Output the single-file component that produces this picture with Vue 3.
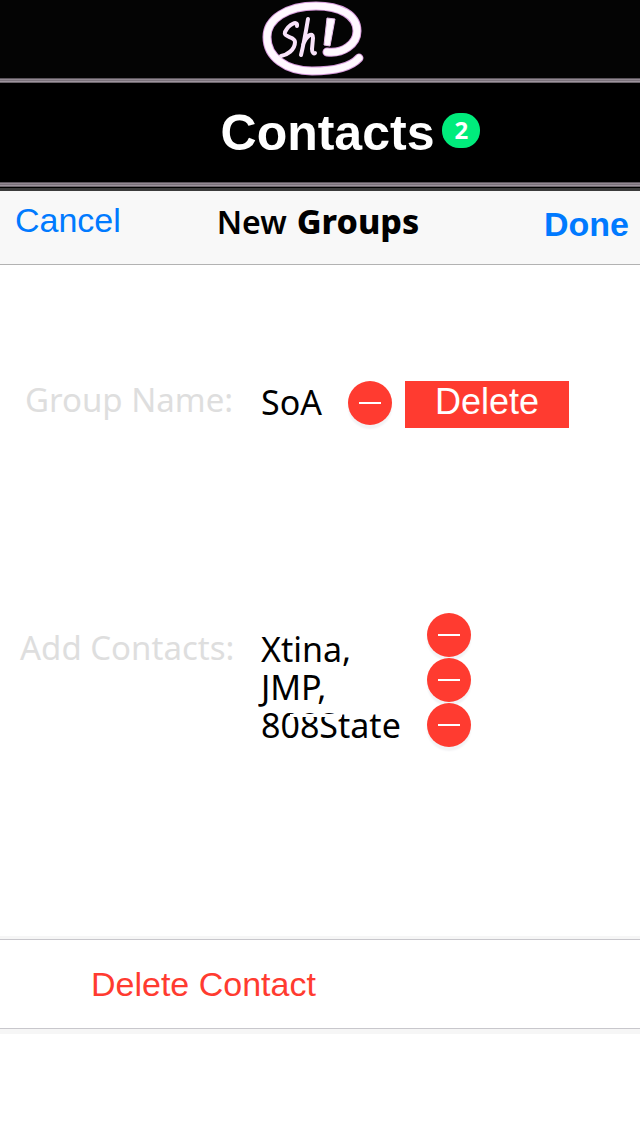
<script setup>
import { ref } from 'vue'

const groupName = ref('SoA')
const contacts = ref('Xtina,\nJMP,\n808State')
const members = ['Xtina', 'JMP', '808State']
</script>

<template>
  <div class="page">
    <header class="brand">
      <svg class="logo" viewBox="0 0 104 76" role="img" aria-label="Sh!">
        <g fill="none" stroke-linecap="round" stroke-linejoin="round">
          <path stroke="#d79bdc" stroke-width="9" d="M66 52 C82 54 96 44 96 31 C96 15 79 6 55 6 C26 6 6 19 6 37 C6 57 25 71 51 71 C72 71 90 67 98 58" />
          <path stroke="#fff8ff" stroke-width="7" d="M66 52 C82 54 96 44 96 31 C96 15 79 6 55 6 C26 6 6 19 6 37 C6 57 25 71 51 71 C72 71 90 67 98 58" />
          <g stroke="#f9e3fa" stroke-width="4">
            <path d="M36 26 C37 20 28 24 24 32 C22 38 34 36 34 42 C34 50 26 55 20 56" />
            <path d="M47 19 C45 31 43 43 40 55 M42 45 C45 36 52 31 52 38 L51 49 C51 53 53 54 54 53" />
          </g>
        </g>
        <path d="M66 18 L74 19 L69 46 L63 45 Z" fill="#fff8ff" stroke="#e6bbe9" stroke-width="1" stroke-linejoin="round" />
      </svg>
    </header>

    <div class="rule"></div>
    <div class="title">
      <h1>Contacts</h1>
      <span class="badge">2</span>
    </div>
    <div class="rule"></div>

    <nav class="nav">
      <button class="cancel" type="button">Cancel</button>
      <h2><span>New</span> <b>Groups</b></h2>
      <button class="done" type="button">Done</button>
    </nav>

    <main>
      <section class="row name-row">
        <label class="label name-label" for="group-name">Group Name:</label>
        <input id="group-name" v-model="groupName" class="field" type="text" />
        <button class="minus" type="button" aria-label="Remove group"></button>
        <button class="delete" type="button">Delete</button>
      </section>

      <section class="row contacts-row">
        <label class="label" for="contacts">Add Contacts:</label>
        <div class="names">
          <textarea id="contacts" v-model="contacts" class="field area" rows="3"></textarea>
          <span class="streak"></span>
        </div>
        <div class="removers">
          <button v-for="m in members" :key="m" class="minus" type="button" :aria-label="`Remove ${m}`"></button>
        </div>
      </section>

      <div class="footer-row">
        <button class="delete-contact" type="button">Delete Contact</button>
      </div>
    </main>
  </div>
</template>

<style>
body {
  margin: 0;
  background: #fff;
}
</style>

<style scoped>
.page {
  min-height: 100vh;
  font-family: "Liberation Sans", Arial, sans-serif;
  color: #000;
}

button,
input,
textarea {
  margin: 0;
  padding: 0;
  border: 0;
  border-radius: 0;
  background: none;
  font-family: inherit;
  color: inherit;
}

h1,
h2 {
  margin: 0;
}

.brand {
  display: flex;
  justify-content: center;
  height: 78px;
  padding-right: 14px;
  background: #040404;
}

.logo {
  width: 104px;
  height: 76px;
}

.rule {
  height: 5px;
  background: linear-gradient(#5c555c 1px, #918891 1px 2px, #7b727b 2px 3px, #9d949d 3px 4px, #6b646b 4px);
}

.title {
  display: flex;
  justify-content: center;
  gap: 8px;
  height: 99px;
  padding-left: 61px;
  background: #000;
}

h1 {
  font-size: 50px;
  line-height: 100px;
  color: #fff;
}

.badge {
  width: 38px;
  height: 35px;
  margin-top: 30px;
  border-radius: 17px;
  background: #00ec7c;
  color: #fff;
  font: bold 24px/34px "Noto Sans", sans-serif;
  text-align: center;
}

.nav {
  display: grid;
  grid-template-columns: 1fr auto 1fr;
  align-items: start;
  height: 73px;
  padding: 0 11px 0 15px;
  background: linear-gradient(#000 1px, #3b3b3b 1px 4px, #f8f8f8 4px);
  border-bottom: 1px solid #b2b2b2;
}

.cancel,
.done {
  font-size: 34px;
  line-height: 40px;
  color: #007aff;
}

.cancel {
  justify-self: start;
  margin-top: 13px;
}

.done {
  justify-self: end;
  margin-top: 17px;
  font-weight: bold;
}

h2 {
  display: flex;
  align-items: baseline;
  gap: 10px;
  margin-top: 12px;
  padding-right: 8px;
  font: 600 32px/44px "Noto Sans", sans-serif;
}

h2 b {
  font-size: 34px;
  font-weight: 800;
}

.nav {
  height: 77px;
}

.row {
  display: flex;
  align-items: flex-start;
}

.name-row {
  padding: 116px 20px 0;
}

.contacts-row {
  padding: 185px 20px 0;
}

.label {
  width: 238px;
  font: 33px/38px "Noto Sans", sans-serif;
  color: #dedede;
  white-space: nowrap;
}

.name-label {
  box-sizing: border-box;
  padding-left: 5px;
}

.field {
  display: block;
  box-sizing: border-box;
  width: 90px;
  height: 42px;
  padding-left: 3px;
  font: 34px/38px "Noto Sans", sans-serif;
}

.contacts-row .label {
  margin-top: 16px;
}

.names {
  position: relative;
  margin-top: 17px;
}

.area {
  width: 169px;
  height: 114px;
  overflow: hidden;
  resize: none;
}

.streak {
  position: absolute;
  top: 84px;
  left: 32px;
  width: 52px;
  height: 3px;
  background: #fff;
}

.minus {
  display: flex;
  align-items: center;
  justify-content: center;
  width: 44px;
  height: 44px;
  border-radius: 50%;
  background: #ff3b30;
  box-shadow: 0 4px 2px #f3f3f5;
}

.minus::before {
  content: "";
  width: 22px;
  height: 2px;
  background: #fff;
}

.delete {
  width: 164px;
  height: 47px;
  margin-left: 13px;
  padding-bottom: 5px;
  background: #ff3b30;
  color: #fff;
  font-size: 36px;
  line-height: 42px;
}

.removers {
  display: flex;
  flex-direction: column;
  gap: 1px;
}

.footer-row {
  margin-top: 189px;
  border-top: 3px solid #f6f6f6;
  border-bottom: 5px solid #f6f6f6;
}

.delete-contact {
  display: block;
  width: 100%;
  height: 90px;
  padding-left: 91px;
  border-top: 1px solid #c8c7cc;
  border-bottom: 1px solid #c8c7cc;
  color: #ff3b30;
  font-size: 34px;
  text-align: left;
}
</style>
